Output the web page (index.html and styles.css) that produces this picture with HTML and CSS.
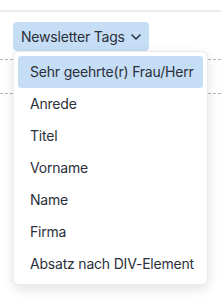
FILE: index.html
```html
<!DOCTYPE html>
<html>
<head>
<meta charset="utf-8">
<link rel="stylesheet" href="styles.css">
</head>
<body>
<div class="topbar"></div>
<div class="toolbar">
  <button class="tags-btn"><span>Newsletter Tags</span>
    <svg class="chev" width="10" height="6" viewBox="0 0 10 6"><path d="M1 1l4 4 4-4" fill="none" stroke="#2d3440" stroke-width="1.6" stroke-linecap="round" stroke-linejoin="round"/></svg>
  </button>
  <ul class="menu">
    <li class="item active">Sehr geehrte(r) Frau/Herr</li>
    <li class="item">Anrede</li>
    <li class="item">Titel</li>
    <li class="item">Vorname</li>
    <li class="item">Name</li>
    <li class="item">Firma</li>
    <li class="item">Absatz nach DIV-Element</li>
  </ul>
</div>
<div class="content">
  <div class="dash first"></div>
  <div class="dash second"></div>
</div>
</body>
</html>
```
FILE: styles.css
```css
* { box-sizing: border-box; }
html, body { margin: 0; padding: 0; background: #fff; }
body {
  font-family: Inter, "Noto Sans", sans-serif;
  color: #2b303a;
  width: 221px;
  height: 301px;
  overflow: hidden;
}
.topbar {
  height: 12px;
  border-bottom: 2px solid #ececec;
}
.toolbar {
  position: relative;
  padding: 10px 0 0 13px;
}
.tags-btn {
  display: flex;
  align-items: center;
  justify-content: space-between;
  height: 29px;
  width: 136px;
  padding: 0 8px;
  border: 0;
  border-radius: 4px;
  background: #c5ddf5;
  font-family: inherit;
  font-size: 14px;
  letter-spacing: -0.2px;
  white-space: nowrap;
  color: #2b303a;
}
.menu {
  position: absolute;
  top: 39px;
  left: 13px;
  width: 195px;
  margin: 0;
  padding: 4px;
  list-style: none;
  background: #fff;
  border: 1px solid #ececec;
  border-radius: 6px;
  box-shadow: 0 4px 12px rgba(0,0,0,0.12);
}
.item {
  height: 32px;
  line-height: 32px;
  padding-left: 12px;
  font-size: 14px;
  letter-spacing: -0.2px;
  border-radius: 3px;
  white-space: nowrap;
}
.item.active { background: #c5ddf5; }
.content { padding-top: 8px; }
.dash {
  border-top: 1px dashed #b5b5b5;
  height: 0;
}
.second { margin-top: 33px; }
```
